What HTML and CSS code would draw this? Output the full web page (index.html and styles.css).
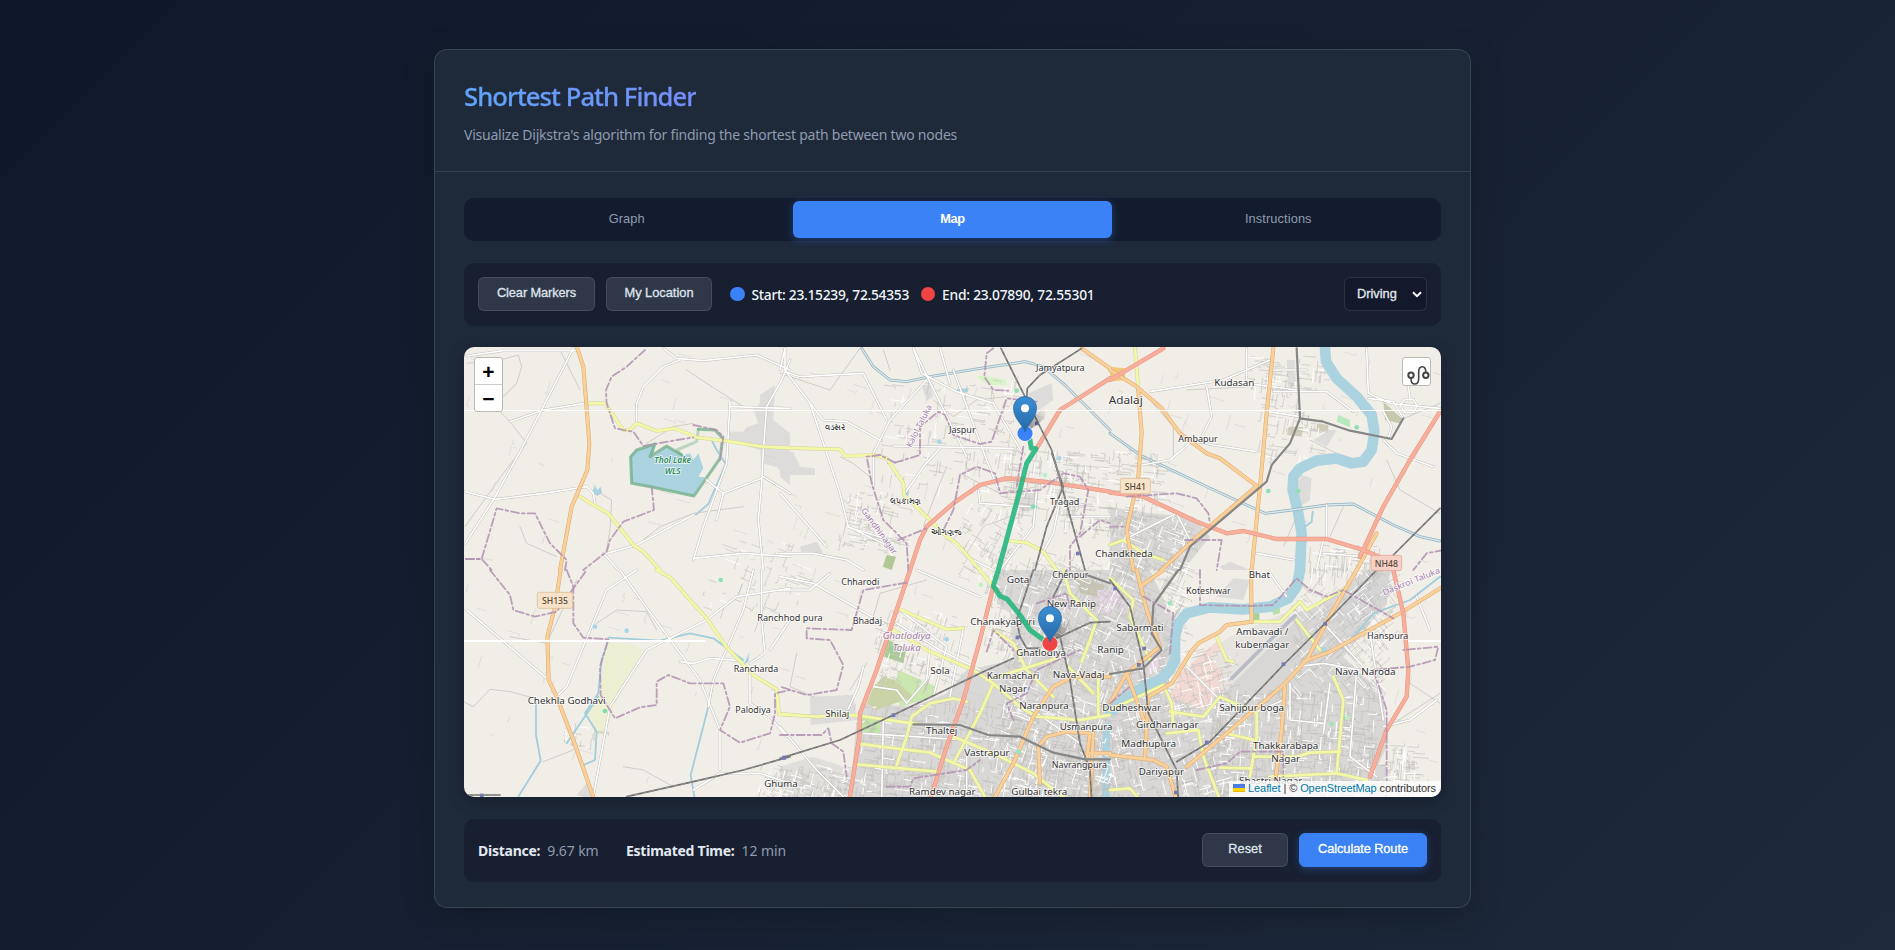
FILE: index.html
```html
<!DOCTYPE html>
<html lang="en">
<head>
<meta charset="utf-8">
<title>Shortest Path Finder</title>
<link rel="stylesheet" href="styles.css">
</head>
<body>
<main class="card">
  <header class="card-header">
    <h1>Shortest Path Finder</h1>
    <p>Visualize Dijkstra's algorithm for finding the shortest path between two nodes</p>
  </header>
  <div class="card-body">
    <nav class="tabs">
      <button class="tab">Graph</button>
      <button class="tab active">Map</button>
      <button class="tab">Instructions</button>
    </nav>
    <section class="panel controls">
      <button class="btn clear">Clear Markers</button>
      <button class="btn locate">My Location</button>
      <div class="legend">
        <span class="dot start"></span><span class="coords first">Start: 23.15239, 72.54353</span>
        <span class="dot end"></span><span class="coords">End: 23.07890, 72.55301</span>
      </div>
      <div class="select"><span>Driving</span><svg width="10" height="7" viewBox="0 0 10 7"><path d="M1 1.2 5 5.2 9 1.2"/></svg></div>
    </section>
    <section class="map">
      <svg id="map" class="map-canvas" viewBox="464 347 977 450"></svg>
      <div class="zoom"><span>+</span><span>−</span></div>
      <div class="routing"><svg width="25" height="25" viewBox="0 0 25 25"><circle cx="8" cy="17.300" r="2.700"/><circle cx="22.800" cy="17.300" r="2.700"/><path d="M8 20.500c0 3.500 1.500 5.500 3.700 5.500 2.500 0 4-2 4-5.500V14c0-3 1-5.300 3.500-5.300s3.600 2 3.600 5.300"/></svg></div>
      <div class="attribution"><svg width="12" height="8" viewBox="0 0 12 8"><path fill="#4c7be1" d="M0 0h12v4H0z"/><path fill="#ffd500" d="M0 4h12v3H0z"/><path fill="#e0bc00" d="M0 7h12v1H0z"/></svg> <a>Leaflet</a> | © <a>OpenStreetMap</a> contributors</div>
    </section>
    <section class="panel summary">
      <div class="stat s1"><b>Distance:</b><span>9.67 km</span></div>
      <div class="stat s2"><b>Estimated Time:</b><span>12 min</span></div>
      <button class="btn reset">Reset</button>
      <button class="btn primary">Calculate Route</button>
    </section>
  </div>
</main>
<script src="map.js"></script>
</body>
</html>
```
FILE: styles.css
```css
* { box-sizing: border-box; }
body {
  margin: 0;
  height: 950px;
  overflow: hidden;
  padding: 49px 424px 0 434px;
  background: linear-gradient(135deg, #0f172a, #1e293b);
  font-family: "Open Sans", "Noto Sans", sans-serif;
  color: #e2e8f0;
}
.card {
  height: 859px;
  border: 1px solid rgba(255, 255, 255, .12);
  border-radius: 13px;
  background: #1e293a;
  box-shadow: 0 8px 32px rgba(0, 0, 0, .22);
}
.card-header {
  height: 122px;
  padding: 28px 29px 0;
  border-bottom: 1px solid rgba(255, 255, 255, .11);
}
h1 {
  margin: 0;
  width: max-content;
  font: 500 25.600px/37px "Noto Sans", sans-serif;
  letter-spacing: -.92px;
  background: linear-gradient(90deg, #60a5fa, #768df9);
  -webkit-background-clip: text;
  background-clip: text;
  color: transparent;
  -webkit-text-stroke: .3px transparent;
}
.card-header p { margin: 9px 0 0; font: 14px/22px "Noto Sans", sans-serif; letter-spacing: -.23px; color: #8f9bae; white-space: nowrap; }
.card-body { padding: 26px 29px 0; }
button, .select { font: 500 12.800px/1 "Liberation Sans", sans-serif; }
.tabs {
  height: 43px;
  display: grid;
  grid-template-columns: repeat(3, 1fr);
  gap: 6.400px;
  padding: 3px;
  border-radius: 10px;
  background: #131c2e;
}
.tab { border: 0; border-radius: 6px; background: none; color: #8f9bae; padding: 0; letter-spacing: .1px; }
.tab.active { background: #3b82f6; color: #fff; box-shadow: 0 2px 8px rgba(59, 130, 246, .35); font-weight: 700; letter-spacing: -.3px; }
.panel {
  display: flex;
  align-items: center;
  height: 63px;
  margin-top: 22px;
  padding: 0 14px;
  border-radius: 10px;
  background: #171f30;
}
.btn {
  height: 34px;
  padding: 0 0 1px;
  border: 1px solid rgba(255, 255, 255, .11);
  border-radius: 6px;
  background: #303748;
  color: #dfe5ee;
  white-space: nowrap;
  -webkit-text-stroke: .3px;
  margin-bottom: 1px;
}
.clear { width: 117px; letter-spacing: -.1px; }
.locate { width: 106px; margin-left: 11px; }
.legend { display: flex; align-items: center; margin-left: 18px; margin-bottom: 1px; }
.dot { width: 14.500px; height: 14.500px; border-radius: 50%; }
.dot.start { background: #3b82f6; }
.dot.end { background: #ef4444; }
.coords { margin: 1px 0 0 7px; font: 500 13.800px/20px "Noto Sans", sans-serif; letter-spacing: -.22px; color: #f1f5f9; white-space: nowrap; width: 153px; }
.coords.first { width: 169px; letter-spacing: -.28px; }
.select {
  display: flex;
  align-items: center;
  justify-content: space-between;
  width: 83px;
  height: 34px;
  margin: 0 0 1px auto;
  padding: 0 4px 0 12px;
  border: 1px solid rgba(255, 255, 255, .11);
  border-radius: 6px;
  background: #13192b;
  -webkit-text-stroke: .3px;
}
.select path { fill: none; stroke: #fff; stroke-width: 2; }
.map {
  position: relative;
  height: 450px;
  margin-top: 21px;
  border-radius: 10px;
  overflow: hidden;
  background: #f1eee8;
  box-shadow: 0 4px 16px rgba(0, 0, 0, .25);
}
.map-canvas { display: block; width: 977px; height: 450px; }
.zoom {
  position: absolute;
  left: 10px;
  top: 10px;
  width: 29px;
  border: 1px solid #bdbab5;
  border-radius: 3px;
  background: #fff;
  color: #000;
}
.zoom span { display: block; height: 26px; font: 700 21px/27px "Liberation Sans", sans-serif; text-align: center; }
.zoom span + span { height: 27px; border-top: 1px solid #ccc; }
.routing {
  position: absolute;
  right: 10px;
  top: 10px;
  width: 29px;
  height: 29px;
  border: 1px solid #bdbab5;
  border-radius: 3px;
  background: #fff;
}
.routing svg { display: block; overflow: visible; }
.routing circle, .routing path { fill: none; stroke: #444; stroke-width: 1.600; }
.routing circle { stroke-width: 2; }
.attribution {
  position: absolute;
  right: 0;
  bottom: 0;
  height: 16px;
  padding: 0 5px 0 4px;
  font: 11px/15px "Liberation Sans", sans-serif;
  letter-spacing: -.09px;
  background: rgba(255, 255, 255, .8);
  color: #333;
  white-space: nowrap;
}
.attribution a { color: #0078a8; }
.stat { display: flex; gap: 7px; font: 14px/20px "Noto Sans", sans-serif; letter-spacing: -.1px; color: #8f9bae; white-space: nowrap; }
.stat b { color: #e2e8f0; letter-spacing: -.25px; }
.s1 { width: 148px; }
.reset { width: 86px; margin-left: auto; }
.primary { width: 128px; margin-left: 11px; background: #3b82f6; border-color: #3b82f6; color: #fff; letter-spacing: -.08px; box-shadow: 0 2px 8px rgba(59, 130, 246, .35); }

/* map layers, in thirds of a pixel */
#map polyline { fill: none; stroke-linejoin: round; stroke-linecap: round; }
.street { fill: none; stroke: #c0bebb; stroke-width: .6; }
.street.sparse { stroke: #cfccc8; stroke-width: .5; }
.street.white { stroke: #fff; stroke-width: 1; }
.minor { stroke: #c8c5c1; stroke-width: 2.500; }
.w-case { stroke: #bcbab7; stroke-width: 7.500; }
.w { stroke: #fff; stroke-width: 5; }
.y-case { stroke: #cdd197; stroke-width: 11; }
.y { stroke: #f3f7a8; stroke-width: 8.500; }
.o-case { stroke: #dda76a; stroke-width: 12; }
.o { stroke: #fad09a; stroke-width: 9; }
.r-case { stroke: #e6937f; stroke-width: 13; }
.r { stroke: #f7ae9b; stroke-width: 10; }
.rail { stroke: #6f6f6f; stroke-width: 5; }
.railgap { stroke: #a5a5a5; stroke-width: 2; stroke-dasharray: 12 12; }
.metro { stroke: #868686; stroke-width: 6.500; }
.bound { stroke: #b090b2; stroke-width: 5.500; stroke-dasharray: 24 9 8 9; opacity: .85; }
.river { stroke: #aad3df; stroke-width: 32; }
.stream { stroke: #a3cddb; stroke-width: 5.500; }
.canal-case { stroke: #8fb0c0; stroke-width: 8.500; }
.canal { stroke: #dfe8e8; stroke-width: 4; }
.route { stroke: #27b67d; opacity: .9; }
.label { font-family: "Noto Sans", "Open Sans", sans-serif; fill: #333; stroke: #fff; stroke-opacity: .75; stroke-width: 5; paint-order: stroke; text-anchor: middle; }
.label.region { fill: #a07aa6; }
.label.lake { fill: #2e8b57; font-style: italic; font-weight: 600; }
.shield { stroke-width: 2; }
.label.ref { stroke: none; fill: #59483a; font-weight: 500; }
```
FILE: map.js
```js
const NS = 'http://www.w3.org/2000/svg';
const map = document.getElementById('map');
const el = (name, attrs, parent = map) => {
  const n = document.createElementNS(NS, name);
  for (const k in attrs) n.setAttribute(k, attrs[k]);
  parent.appendChild(n);
  return n;
};
// Tile origins; coordinates inside a tile are thirds of a pixel.
const origin = { A: [460, 340], B: [780, 340], C: [1110, 340], D: [460, 570], E: [780, 570], F: [1110, 570] };
const tf = t => `translate(${origin[t]}) scale(.33333)`;

const areas = [
  ['A', '#dddcdb', '805,275 850,275 860,262 895,250 880,210 900,190 900,165 945,135 940,240 990,280 990,420 950,380 905,370 900,330 850,315 810,305'],
  ['B', '#dddcdb', '0,335 40,335 60,380 105,385 105,405 30,405 30,435 0,410'],
  ['B', '#dddcdb', '745,160 815,130 820,180 770,215'], ['B', '#dddcdb', '425,135 450,135 460,170 440,182'],
  ['B', '#dcdbda', '720,460 775,458 770,510 718,515'], ['B', '#dcdbda', '60,620 110,605 130,640 65,645'],
  ['C', '#dddcdb', '575,405 605,415 600,480 570,500 560,440'], ['C', '#dddcdb', '530,60 555,60 550,150 535,150'],
  ['C', '#dddcdb', '610,300 660,270 680,270 650,320'], ['C', '#d9d8d6', '0,500 120,520 250,530 300,590 220,690 0,690'],
  ['C', '#dddcdb', '330,680 360,665 420,690 340,690'],
  ['E', '#d9d8d6', '660,0 990,0 990,690 210,690 230,440 250,400 400,410 500,370 560,300 700,270 690,130 650,100'],
  ['E', '#dddcdb', '90,380 220,375 230,450 92,465'], ['E', '#e1dfdc', '100,560 220,600 215,690 40,690 0,650 0,590'],
  ['F', '#d8d7d5', '0,0 120,0 200,170 190,280 170,350 300,420 330,300 500,180 560,130 700,60 760,0 840,0 830,100 700,260 740,300 820,370 830,530 780,640 820,690 0,690'],
  ['F', '#e7e4df', '300,240 360,200 520,130 560,150 340,370 300,300'],
  ['F', '#d5d5d5', '670,150 760,30 830,10 850,60 740,190'], ['F', '#dddcdb', '320,80 370,25 420,30 400,90'],
  ['F', '#d8d7d5', '790,590 830,580 820,690 770,690'],
  ['D', '#dddcdb', '380,640 400,655 405,690 350,675'], ['D', '#edefd2', '440,215 520,225 550,240 500,340 470,390 440,480 410,500 380,440 420,370'],
  ['B', '#d9f3c8', '590,108 620,108 680,120 680,135 620,135'], ['B', '#b1c795', '320,645 348,650 335,690 308,680'],
  ['E', '#a9cc92', '325,210 378,235 370,280 312,260'], ['E', '#cbe7b0', '355,300 470,350 465,380 360,410 345,350'],
  ['E', '#c9d3a6', '310,320 345,330 400,380 290,420 260,400 280,350'], ['E', '#c2e5a8', '240,440 300,450 300,500 240,480'],
  ['E', '#c8c6b2', '890,20 975,45 960,80 900,70'], ['E', '#e5d8e4', '950,60 990,60 990,150 960,120'],
  ['F', '#e5d8e4', '0,30 40,90 45,140 20,120 0,90'], ['F', '#e5d8e4', '120,250 155,240 150,290 110,315'],
  ['F', '#f2d9d3', '210,310 320,215 330,235 300,260 335,310 330,350 285,420 180,380'],
  ['F', '#aacf94', '430,125 448,125 448,150 430,152'], ['F', '#b9dfa8', '485,115 510,112 510,130 490,135'],
  ['C', '#c6c9ae', '820,185 875,235 870,250 825,240'], ['C', '#cfcdb9', '535,260 580,262 575,290 535,285'],
  ['C', '#cfcdb9', '620,250 655,255 655,272 622,274'], ['C', '#b8e8bd', '685,225 720,240 720,262 680,245'],
  ['C', '#f4c67c', '0,80 45,85 45,120 0,125'],
  ['A', '#aad3df', '510,350 530,330 585,312 580,350 620,318 670,345 690,340 700,360 715,340 730,385 715,410 735,412 700,468 572,440 515,430'],
  ['A', '#aad3df', '395,455 403,442 402,432 412,450 422,440 426,458 412,468'],
  ['B', '#aad3df', '530,147 567,145 562,157 535,159'], ['B', '#aad3df', '375,450 388,445 385,468 373,465'],
  ['D', '#aad3df', '868,248 865,275 850,285'],
  ['E', '#aad3df', '968,470 990,450 990,690 965,690 968,580']
];
const lines = {
  river: [['C', '645,25 648,65 680,115 740,170 785,225 793,275 785,330 760,365 725,370 680,355 620,362 570,385 550,410 548,450 565,520 575,580 570,690'],
    ['F', '570,0 560,50 535,85 480,110 400,118 300,112 230,130 205,160 195,200 195,270 180,300 150,330 100,350 50,385 0,425']],
  'canal-case canal': [['B', '245,25 280,80 330,120 380,125 450,110 600,85 735,65 790,80 860,140 990,270'], ['C', '0,280 90,345 300,445 465,520 545,510 650,495 730,492 850,555 930,590 990,603']],
  stream: [['A', '755,300 770,330 797,372 745,492 708,524'], ['D', '445,203 600,212 690,190 760,205 850,270'], ['D', '445,210 425,270 415,370 375,430 410,485 405,570 370,585'], ['D', '415,380 320,520'], ['D', '228,400 228,495 242,572 175,680'], ['D', '755,360 740,430 692,615 705,690'], ['C', '608,515 605,545 585,560'], ['F', '990,20 900,90 790,130 740,190 690,235']],
  minor: [['A', '120,215 150,245 200,310 130,400 15,560'], ['A', '20,70 120,60 175,45 185,80 170,130 110,190'], ['A', '300,30 360,150'], ['A', '180,560 200,610 290,650'], ['A', '680,90 740,130 850,200'], ['A', '550,600 600,560 700,520 850,500'], ['A', '420,460 455,480 450,570 440,630'], ['A', '560,310 640,260 700,250'],
    ['D', '0,390 40,410 90,358 150,365 225,385'], ['D', '250,575 340,540'], ['D', '350,30 260,220 150,200'], ['D', '490,590 550,600 640,650'], ['D', '410,160 470,120 560,125 590,180'],
    ['B', '240,25 150,150 0,100'], ['B', '280,420 220,370 180,350'], ['B', '460,180 520,230 590,180 680,170'], ['B', '500,380 460,480 430,560'], ['B', '540,400 660,460 770,440'], ['B', '330,90 310,30'], ['B', '560,640 610,560 690,530'],
    ['C', '120,180 190,260 190,350'], ['C', '230,150 420,140'], ['C', '600,300 680,340'], ['C', '870,240 990,190'], ['C', '560,530 520,620'], ['C', '700,500 660,590'], ['C', '830,360 870,450 990,520'],
    ['E', '50,250 30,350 100,380'], ['E', '440,30 300,70 280,140'], ['E', '260,280 210,360'], ['F', '900,340 990,400'], ['F', '820,480 990,370'], ['F', '650,0 600,70 560,30']],
  'w-case w': [['A', '15,612 100,480 180,335 340,25'], ['A', '20,48 130,32 350,32'], ['A', '150,245 250,210 375,190'], ['A', '15,455 105,478 250,460 380,440 400,460 405,490'], ['A', '610,25 650,55 730,62 890,45 990,90'], ['A', '530,245 530,190 550,140 610,80 660,60'], ['A', '990,60 965,120 920,200 910,330 905,430 895,540 910,690'], ['A', '810,185 800,370 730,560 700,660'], ['A', '810,200 990,205'], ['A', '440,640 530,615 700,525'], ['A', '905,415 790,460'], ['A', '910,410 990,460'], ['A', '430,640 475,690'], ['A', '700,655 850,640 990,650'], ['A', '975,25 960,90'], ['A', '740,420 790,460 770,540'],
    ['D', '20,120 260,325'], ['D', '530,0 440,60 320,350 290,380'], ['D', '480,0 550,100 720,330 780,480 780,600'], ['D', '880,0 850,120 760,330 745,410'], ['D', '400,680 450,410 560,240 740,150 830,80 990,55'], ['D', '905,0 905,150 915,250 870,280'], ['D', '660,275 700,280 750,265 840,272'], ['D', '870,310 870,400 930,440 980,500'], ['D', '700,660 780,610 900,610 990,640'], ['D', '990,150 930,240'],
    ['B', '15,25 15,90 90,190 180,460 205,560 330,620'], ['B', '15,95 60,110 250,100 320,240'], ['B', '440,120 330,240 280,340 280,440'], ['B', '400,25 425,100 530,155 640,190 730,345'], ['B', '480,25 510,130'], ['B', '90,190 130,240 200,245 300,300'], ['B', '340,318 700,325'], ['B', '400,25 560,350'], ['B', '520,90 620,360 660,460'], ['B', '375,460 430,380 480,325'], ['B', '0,460 140,620'], ['B', '770,450 760,560 660,690'], ['B', '850,430 820,580 760,690'], ['B', '200,560 330,600'], ['B', '490,580 560,650 640,690'], ['B', '595,450 600,490 750,500'], ['B', '0,640 100,640 200,660 250,690'], ['B', '870,530 990,530'],
    ['C', '120,155 340,120 480,60'], ['C', '290,140 305,230 270,300'], ['C', '410,25 410,130 560,150'], ['C', '770,25 775,160 840,190 990,205'], ['C', '490,155 650,155 730,215'], ['C', '475,215 570,230'], ['C', '240,300 310,315 440,335'], ['C', '95,375 180,360 250,300'], ['C', '480,90 590,90'], ['C', '650,495 650,600'], ['C', '820,300 860,340 970,380'], ['C', '900,175 895,140'], ['C', '870,195 885,178 910,178 922,198 910,218 885,218 870,195'], ['C', '775,175 850,185 880,235'], ['C', '820,215 845,260 835,295'], ['C', '440,640 550,660'], ['C', '640,640 760,650'], ['C', '40,600 200,520 250,620'], ['C', '620,690 640,600'],
    ['E', '0,60 90,60 150,10'], ['E', '0,20 100,40 310,160'], ['E', '410,0 600,80'], ['E', '360,120 500,230 460,380'], ['E', '350,160 480,240 600,300'], ['E', '250,290 235,350 190,450'], ['E', '0,470 110,600 200,690'], ['E', '280,350 350,360 380,400 440,330 450,230'], ['E', '550,175 510,380'], ['E', '250,490 560,510'], ['E', '310,450 305,690'], ['E', '560,520 560,690'], ['E', '700,380 900,520'],
    ['F', '780,190 820,450'], ['F', '650,170 760,290'], ['F', '560,290 640,280 750,300'], ['F', '540,340 540,450 640,460'], ['F', '740,300 720,560 800,620'], ['F', '640,490 660,340'], ['F', '430,430 520,390'], ['F', '920,80 960,180'], ['F', '480,10 530,80'], ['F', '230,290 320,380'], ['F', '820,470 900,450 980,390']],
  'y-case y': [['A', '380,190 435,190 490,270 510,270 530,250 590,273 645,265 710,292 800,303 905,320 990,324'], ['A', '360,470 400,495 445,520 520,615 550,635 600,690'],
    ['B', '0,323 180,328 195,348 280,345 320,355 370,430 372,465 440,530 500,590 530,610 600,690'], ['B', '690,603 740,608 790,635 830,690'],
    ['D', '590,0 630,22 690,90 740,145 800,232 880,315 950,358 957,432 990,434'], ['C', '75,25 85,150'], ['C', '0,615 40,600 100,640 160,660'],
    ['E', '0,433 110,440 220,435 410,462'], ['E', '360,118 500,178 550,175'], ['E', '340,180 450,245 580,300 640,340 720,410 770,440 900,450 990,435'], ['E', '240,522 450,548 570,600 620,690'], ['E', '232,583 470,605'], ['E', '350,585 380,500 395,440 450,400 520,385 560,395'], ['E', '640,340 600,430 520,580'], ['E', '850,0 870,70 950,150 930,210 905,275'], ['E', '520,500 640,550 760,610 860,690'], ['E', '640,180 700,220 740,300 820,380'], ['E', '620,330 830,265'], ['E', '600,0 640,50'], ['E', '865,290 940,370'], ['E', '955,310 955,440'],
    ['F', '0,25 70,90 60,140 120,270'], ['F', '715,50 590,120 570,95 510,155 430,155'], ['F', '320,200 350,270 368,275'], ['F', '0,420 160,345 185,400 190,470'], ['F', '180,425 280,440 330,380 440,430 440,500 420,620'], ['F', '170,490 265,480 280,560 330,690'], ['F', '560,150 630,240'], ['F', '670,320 700,390 680,610'], ['F', '330,593 420,595'], ['F', '350,490 430,510'], ['F', '430,560 560,560 600,548 690,545'], ['F', '480,620 680,610 770,630'], ['F', '0,660 60,655 90,690']],
  'o-case o': [['A', '352,25 370,80 378,180 388,310 382,390 335,500 300,690'], ['D', '302,0 285,110 262,200 266,330 290,380 340,510 403,690'],
    ['B', '905,25 990,85'], ['C', '0,90 80,140 155,205 210,280 290,340 330,355 440,438'], ['C', '85,150 95,280 85,410 50,570 70,690'], ['C', '490,25 470,220 450,440 425,690'], ['C', '440,438 380,490 250,600 155,690'], ['C', '800,580 740,690'],
    ['F', '80,0 110,120 150,230 50,310 0,400'], ['F', '423,0 425,155 350,165 330,185 265,220 240,250 185,340 115,380 105,560'], ['F', '740,0 670,120 590,270 520,345 350,490 230,590'], ['F', '990,55 870,130 660,245 580,275'], ['F', '525,350 515,480 495,640'], ['F', '0,555 130,570 170,590 200,690'], ['F', '50,310 105,460'],
    ['E', '640,690 700,580 760,440 820,350 880,320 990,320'], ['E', '780,640 775,530 800,500 860,485 930,490 920,570'], ['E', '920,550 990,550'], ['E', '940,490 930,690'], ['F', '90,50 160,0']],
  'r-case r': [['B', '990,115 840,210 770,325'], ['B', '390,690 420,600 440,560 520,490 600,435 680,415 740,420 830,430 990,455'], ['C', '160,25 0,120'], ['C', '0,458 100,470 260,545 350,580 400,573 500,597 650,597 760,630 830,660'], ['C', '990,215 900,360 820,500 750,650'], ['E', '390,0 340,150 290,300 240,430 238,500 208,690'], ['E', '640,50 600,210 550,390 500,530 450,690'], ['F', '850,0 880,130 895,300 890,380 830,480 780,620']],
  'rail railgap': [['B', '663,25 740,180 815,330 915,690'], ['B', '905,25 780,105 742,145 740,175'], ['B', '815,340 850,440 800,560 765,690'], ['C', '990,505 850,645'], ['F', '800,0 640,165 520,285 300,515 200,575'], ['D', '500,680 700,635 850,600 990,560'], ['D', '15,675 120,675'], ['E', '0,565 180,510 340,435 610,305 700,265'], ['E', '830,205 930,158 990,155'], ['E', '760,0 710,150 720,200 740,235 780,235'], ['E', '840,200 870,330 900,520 930,600 935,690'], ['F', '0,30 60,110 100,280 115,430 160,520 200,600 205,690'], ['E', '860,0 820,80']],
  metro: [['C', '560,25 570,235 540,310 485,375 470,425 240,620 210,690'], ['C', '570,235 640,245 720,272 845,297 880,235'], ['E', '400,463 540,465 625,495 720,500 820,548 915,568 990,568'], ['E', '920,15 990,40'], ['F', '205,0 130,105 125,190 155,240 100,295 0,312']],
  bound: [['A', '555,30 500,80 455,110 438,150 440,190 465,265 520,275 550,318 650,300 700,292'], ['A', '575,440 582,510 490,545 450,600 440,635 370,690'], ['A', '18,657 65,657 110,505 180,520 225,520 270,610 320,660 315,690'], ['A', '18,657 65,657 95,690'], ['A', '700,255 770,270 790,290 780,360'],
    ['D', '90,0 150,75 160,120 225,140 290,125 380,0'], ['D', '320,0 340,50 340,160 370,203 445,208 420,290 422,375 465,445 540,412 590,405 590,335 625,315 690,340 790,340 810,410 780,480 840,518 930,490 945,430 945,370 990,360'],
    ['B', '345,368 420,345 420,260 475,215 495,225 520,285 600,312 635,305 680,175 770,185'], ['B', '640,25 620,40 613,110 640,150 685,152'], ['B', '345,368 300,345 260,350 275,430 310,540 380,610 385,690'], ['B', '490,570 520,510 540,405 590,380 645,400 660,460 780,450 850,400 900,410 925,450 915,500 900,580 870,620 870,690'], ['B', '730,320 710,440'], ['B', '355,600 440,565'], ['B', '900,590 960,540 990,550'],
    ['C', '50,470 200,460 260,475 295,520 300,550'], ['C', '0,560 40,560'], ['C', '225,600 335,600 320,690'], ['C', '1000,630 950,640 910,690'],
    ['E', '380,38 250,60 215,180 80,175 80,205 150,210 190,285 170,360 80,375 0,350'], ['E', '0,495 125,495 145,475 155,520 190,545 200,620'], ['E', '320,650 390,650 400,625 560,600 600,570'], ['E', '620,245 640,180 700,240'], ['E', '770,100 860,70 870,120'], ['E', '700,450 680,400 740,370 770,300 900,240'],
    ['F', '270,0 270,105 420,108 490,105 560,25 600,60 650,80 700,60 850,145'], ['F', '790,300 900,290 975,270 985,230 880,240'], ['F', '790,300 830,420 830,690'], ['F', '0,400 60,350'], ['F', '100,80 190,130 180,250'], ['F', '260,600 350,580 390,545 520,545 520,620']]
};
// Deterministic street texture inside built-up zones: x, y, w, h, count, angle.
let seed = 11;
const rnd = () => (seed = (seed * 16807) % 2147483647) / 2147483647;
const zones = [
  [1040, 560, 145, 90, 480, 25], [855, 700, 250, 95, 700, 8], [1000, 640, 120, 150, 600, 20], [1110, 650, 120, 145, 560, -15],
  [1210, 690, 165, 105, 680, 5], [1290, 590, 90, 100, 330, -40], [1350, 560, 40, 80, 80, -35], [1000, 450, 75, 65, 140, 8], [1060, 450, 100, 80, 200, 5], [1110, 515, 80, 55, 190, 20],
  [760, 765, 90, 32, 150, 15], [1245, 355, 80, 35, 70, 5], [1260, 390, 60, 70, 60, 10], [840, 490, 60, 60, 90, 12], [875, 610, 80, 70, 130, 18], [880, 380, 140, 110, 120, 8], [985, 545, 90, 110, 200, 15],
  [1310, 545, 70, 30, 80, 5], [700, 540, 100, 80, 60, 20], [1385, 745, 30, 50, 90, 3], [560, 720, 40, 25, 20, 5], [960, 500, 60, 70, 70, 30], [464, 350, 970, 440, 230, 17]
];

for (const [t, fill, points] of areas) el('polygon', { points, fill, transform: tf(t) });
const wls = { fill: 'none', stroke: '#6fae84', 'stroke-width': 9, opacity: .75, transform: tf('A') };
el('polyline', { ...wls, points: '715,268 765,270 788,295 780,355 702,468 572,440 515,430 512,350 530,330 585,312 570,350 620,318 665,345' });
el('polyline', { ...wls, opacity: .4, points: '665,345 650,330 710,305 715,268' });
for (const [x, y, w, h, n, a] of zones) {
  let grey = '', white = '';
  const c = Math.cos(a * Math.PI / 180), s = Math.sin(a * Math.PI / 180);
  for (let i = 0; i < n; i++) {
    const px = x + rnd() * w, py = y + rnd() * h, len = 3 + rnd() * 13, flip = rnd() > .5;
    const dx = (flip ? -s : c) * len, dy = (flip ? c : s) * len;
    const bend = rnd() * 6 - 3;
    const seg = `M${px.toFixed(1)} ${py.toFixed(1)}l${dx.toFixed(1)} ${dy.toFixed(1)}l${(-dy / len * bend).toFixed(1)} ${(dx / len * bend).toFixed(1)}`;
    if (rnd() > .8 && w < 900) white += seg; else grey += seg;
  }
  el('path', { class: w > 900 ? 'street sparse' : 'street', d: grey });
  if (white) el('path', { class: 'street white', d: white });
}
for (const kinds in lines)
  for (const cls of kinds.split(' '))
    for (const [t, points] of lines[kinds]) el('polyline', { class: cls, points, transform: tf(t) });
// airport runway
el('polyline', { points: '365,325 440,250 555,137', stroke: '#b9bbc9', 'stroke-width': 11, transform: tf('F') });
for (const [t, x, y, f] of [['B', 710, 152, '#8fe0b0'], ['B', 795, 405, '#b5f0cf'], ['B', 838, 355, '#a6d7e8'], ['B', 760, 500, '#7fe0b8'], ['B', 478, 305, '#a6d7e8'], ['D', 435, 423, '#7be0ae'], ['D', 782, 30, '#8fe0b0'], ['D', 405, 170, '#a6d7e8'], ['D', 500, 182, '#a6d7e8'], ['C', 475, 453, '#8fe0b0'], ['C', 565, 453, '#8fe0b0'], ['C', 740, 262, '#8fe0b0'], ['F', 180, 100, '#9be5bb'], ['F', 712, 443, '#b2f3c0'], ['F', 665, 462, '#9be5bb'], ['E', 715, 545, '#8fe8c0'], ['E', 602, 45, '#c0f0b8'], ['F', 643, 237, '#a6d7e8'], ['E', 500, 208, '#a6d7e8']])
  el('circle', { cx: x, cy: y, r: 7, fill: f, transform: tf(t) });
for (const [t, x, y] of [['B', 770, 250], ['B', 893, 640], ['E', 340, 435], ['E', 12, 562], ['E', 712, 202], ['F', 645, 161], ['F', 520, 282], ['F', 290, 517], ['F', 197, 667], ['F', 15, 55], ['F', 102, 235], ['F', 86, 284], ['D', 972, 563], ['D', 65, 676]])
  el('rect', { x: x - 5, y: y - 5, width: 11, height: 11, fill: '#7478b4', transform: tf(t) });
el('line', { x1: 464, y1: 410.5, x2: 1441, y2: 410.5, stroke: '#fff', 'stroke-width': 1 });
el('line', { x1: 464, y1: 641, x2: 705.5, y2: 641, stroke: '#fff', 'stroke-width': 2 });
el('line', { x1: 1408, y1: 641, x2: 1441, y2: 641, stroke: '#fff', 'stroke-width': 2 });

// tile, text, centre x, baseline y, width, size, class, rotation
const labels = [
  ['B', 'Jamyatpura', 841, 92, 146, 28], ['B', 'Jaspur', 547, 278, 80, 28], ['B', 'વડસર', 165, 270, 60, 24], ['B', 'લપકામણ', 377, 491, 92, 24], ['B', 'ઓગણજ', 499, 586, 94, 24], ['B', 'Tragad', 854, 496, 88, 28],
  ['B', 'Kalol Taluka', 425, 262, 140, 25, 'region', -63], ['B', 'Gandhinagar', 291, 578, 165, 25, 'region', 54],
  ['C', 'Kudasan', 373, 137, 120, 28], ['C', 'Adalaj', 47, 193, 102, 34], ['C', 'Ambapur', 264, 306, 118, 28], ['C', 'Chandkheda', 42, 652, 172, 29],
  ['A', 'Thol Lake', 638, 370, 110, 26, 'lake'], ['A', 'WLS', 638, 402, 48, 26, 'lake'],
  ['D', 'Chekhla Godhavi', 320, 401, 234, 29], ['D', 'Ranchhod pura', 990, 154, 196, 28], ['D', 'Rancharda', 888, 307, 134, 28], ['D', 'Palodiya', 879, 430, 106, 28], ['D', 'Ghuma', 963, 650, 100, 28],
  ['E', 'Chharodi', 241, 45, 114, 28], ['E', 'Bhadaj', 262, 162, 88, 28], ['E', 'Gota', 714, 39, 68, 28], ['E', 'Chenpur', 871, 24, 108, 27], ['E', 'New Ranip', 874, 111, 148, 28], ['E', 'Chanakyapuri', 668, 165, 194, 29], ['E', 'Ghatlodiya', 380, 206, 144, 27, 'region'], ['E', 'Taluka', 380, 243, 84, 27, 'region'], ['E', 'Ghatlodiya', 783, 257, 150, 28], ['E', 'Sola', 480, 311, 58, 28], ['E', 'Karmachari', 699, 327, 158, 28], ['E', 'Nagar', 699, 366, 84, 28], ['E', 'Nava-Vadaj', 896, 323, 156, 28], ['E', 'Naranpura', 792, 418, 148, 28], ['E', 'Shilaj', 172, 440, 72, 28], ['E', 'Thaltej', 485, 491, 94, 28], ['E', 'Usmanpura', 918, 479, 158, 28], ['E', 'Vastrapur', 621, 559, 136, 28], ['E', 'Navrangpura', 898, 595, 166, 27], ['E', 'Ramdev nagar', 487, 675, 200, 28], ['E', 'Gulbai tekra', 778, 674, 168, 28],
  ['F', 'Bhat', 448, 24, 64, 28], ['F', 'Koteshwar', 295, 72, 134, 27], ['F', 'Sabarmati', 90, 184, 142, 28], ['F', 'Ranip', 2, 249, 80, 28], ['F', 'Ambavadi /', 457, 196, 156, 28], ['F', 'kubernagar', 457, 235, 162, 28], ['F', 'Hanspura', 833, 208, 124, 26], ['F', 'Nava Naroda', 766, 316, 182, 28], ['F', 'Sahijpur boga', 425, 424, 194, 28], ['F', 'Dudheshwar', 65, 424, 176, 28], ['F', 'Girdharnagar', 172, 474, 188, 28], ['F', 'Madhupura', 116, 532, 164, 28], ['F', 'Thakkarabapa', 527, 538, 196, 28], ['F', 'Nagar', 527, 577, 86, 28], ['F', 'Dariyapur', 154, 616, 136, 28], ['F', 'Shastri Nagar', 482, 642, 190, 28], ['F', 'Daskroi Taluka', 907, 42, 184, 25, 'region', -22]
];
for (const [t, x, y, w, h, text, fill, line] of [['A', 232, 757, 106, 48, 'SH135', '#f5e2c8', '#d8b48a'], ['C', 31, 415, 90, 46, 'SH41', '#f6e3c9', '#d8b48a'], ['C', 783, 646, 92, 46, 'NH48', '#f5d0c6', '#dd9d8b']]) {
  el('rect', { class: 'shield', x, y, width: w, height: h, rx: 6, fill, stroke: line, transform: tf(t) });
  el('text', { class: 'label ref', x: x + w / 2, y: y + 34, 'font-size': 26, transform: tf(t) }).textContent = text;
}
for (const [t, text, x, y, w, size, cls, rot] of labels) {
  const n = el('text', { class: 'label ' + (cls || ''), x, y, 'font-size': size, textLength: w, lengthAdjust: 'spacingAndGlyphs', transform: tf(t) + (rot ? ` rotate(${rot} ${x} ${y})` : '') });
  n.textContent = text;
  if (cls === 'region' && !rot) n.style.fontStyle = 'italic';
}
const p = (t, pts) => pts.map(([x, y]) => `${origin[t][0] + x / 3},${origin[t][1] + y / 3}`).join(' ');
el('polyline', { 'stroke-width': 5, class: 'route', points: p('B', [[750, 300], [754, 325], [768, 326], [740, 370], [720, 450], [655, 690]]) + ' ' + p('E', [[640, 48], [660, 78], [682, 88], [720, 135], [750, 180], [800, 217]]) });

const defs = el('defs', {});
const grad = el('linearGradient', { id: 'pin', x1: 0, y1: 0, x2: 0, y2: 1 }, defs);
el('stop', { offset: 0, 'stop-color': '#3a8fd3' }, grad);
el('stop', { offset: 1, 'stop-color': '#2668a8' }, grad);
const sh = el('linearGradient', { id: 'shade', x1: 0, y1: 1, x2: 1, y2: 0 }, defs);
el('stop', { offset: 0, 'stop-color': '#000', 'stop-opacity': .5 }, sh);
el('stop', { offset: 1, 'stop-color': '#000', 'stop-opacity': 0 }, sh);
for (const [x, y, fill] of [[1025, 433.5, '#3b82f6'], [1050, 643.5, '#ef4444']]) {
  const g = el('g', { transform: `translate(${x} ${y})` });
  el('path', { d: 'M0 0C2 -8 8 -18 17 -24C22 -26 22 -18 16 -12Z', fill: 'url(#shade)' }, g);
  el('circle', { r: 8.3, fill: '#fff', opacity: .85 }, g);
  el('circle', { r: 7.6, fill }, g);
  el('path', { d: 'M0 -1.500C-2 -8 -11.500 -15 -11.500 -25.500A11.500 11.500 0 0 1 11.500 -25.500C11.500 -15 2 -8 0 -1.500Z', fill: 'url(#pin)', stroke: '#2a6ba8', 'stroke-width': .8 }, g);
  el('circle', { cy: -25.3, r: 4, fill: '#fff' }, g);
}
```
